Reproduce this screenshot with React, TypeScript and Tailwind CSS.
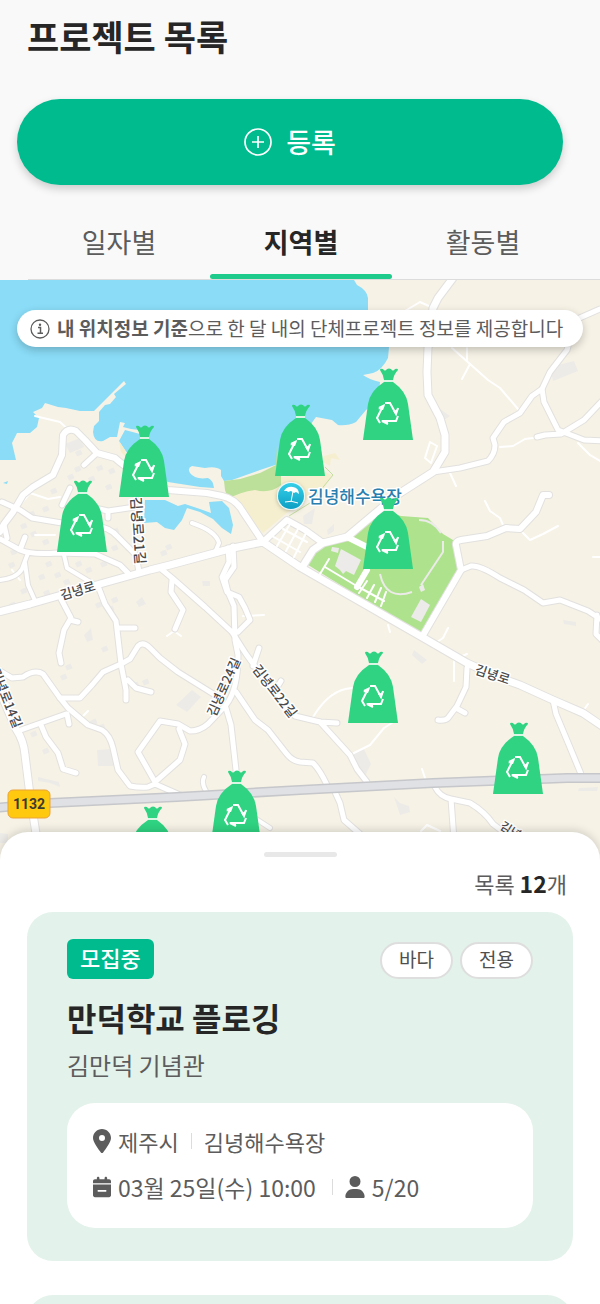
import React, { useState } from 'react';
import { FaCalendarMinus, FaLocationDot, FaUser } from 'react-icons/fa6';

const tabs = ['일자별', '지역별', '활동별'];

const pins = [
  { x: 119, y: 425 },
  { x: 57, y: 480 },
  { x: 275, y: 404 },
  { x: 363, y: 368 },
  { x: 363, y: 497 },
  { x: 348, y: 651 },
  { x: 493, y: 722 },
  { x: 211, y: 770 },
  { x: 127, y: 806 },
];

// Main roads, drawn with a grey casing under the white line
const roads = [
  { w: 7, d: 'M-5 613L30 604L100 584L150 570L170 565L233 548L263 542L300 567L422 637L467 663L500 678L520 685L553 700L583 713L605 728' },
  { w: 7, d: 'M453 278L438 298L433 308L428 348L427 372L428 395L440 418L445 435L445 452L433 472L397 495L347 537L323 543L313 550L303 566' },
  { w: 6, d: 'M263 542L287 520L305 530L323 543' },
  { w: 6, d: 'M263 542L243 512Q236 499 222 496L207 493L168 490Q130 472 115 458L97 453L85 440L76 431Q68 427 63 435L62 455L53 475L33 487L23 495L13 512L4 524L0 532' },
  { w: 6, d: 'M422 637L461 570L456 545Q455 541 461 540L487 536L506 528L520 529L536 512L543 495L549 495' },
  { w: 5, d: 'M461 570L471 566Q480 565 500 578L524 590L543 603L560 600L588 611L605 622M597 615L596 634L604 642' },
  { w: 5, d: 'M433 472L460 468L488 461Q495 454 495 445L493 438L504 422L520 413L532 396L542 389L550 372L567 350L575 320L600 309' },
  { w: 5, d: 'M542 389L544 402L558 430L584 440L605 441M537 437L545 435L561 434L584 420L603 400' },
  { w: 5, d: 'M0 671L12 678L23 677Q35 669 43 674L60 698L68 708L88 725L102 730Q110 735 113 748L118 770L130 786Q140 788 148 787L155 784L180 795' },
  { w: 5, d: 'M60 698L80 698L92 685L103 672L121 664L130 659L138 646Q143 641 150 648L160 658L178 672L215 695' },
  { w: 5, d: 'M98 586L105 604L116 621L121 664L126 690L126 700M118 628L135 628M128 680L136 688L151 692' },
  { w: 5, d: 'M61 599L71 618L64 630L59 653L61 663M70 620L78 622' },
  { w: 5, d: 'M160 568L172 578L205 607L232 632L246 654L265 680L288 709' },
  { w: 5, d: 'M233 546L234 567L225 580L228 592L234 606L235 640L238 655Q238 690 226 705L208 724Q200 731 190 731L178 724L160 721L138 752L155 782L180 760L185 744L179 729' },
  { w: 5, d: 'M228 548L229 562L222 577L227 592L239 597L245 608L250 620L238 632' },
  { w: 5, d: 'M226 708L231 725L236 770L236 790M236 692L255 720L268 730L286 753Q292 761 300 762L313 763Q320 770 327 785' },
  { w: 5, d: 'M172 580L171 592L183 610L175 629M253 666L259 648M276 689L281 681' },
  { w: 5, d: 'M18 731L66 714M41 725L46 737L58 753L63 769L76 773M67 714L69 724' },
  { w: 7, d: 'M0 692L16 729Q24 741 25 755L30 795L37 840' },
  { w: 5, d: 'M295 716L320 722L337 723M320 722L350 755L357 769L367 782' },
  { w: 5, d: 'M467 668L466 687L457 706L448 718Q445 721 438 720M456 708L465 713' },
  { w: 5, d: 'M553 700L556 714L569 745L581 774' },
  { w: 5, d: 'M435 787Q440 797 451 799L470 803Q485 812 493 824L506 834M451 799L454 840M335 792L340 803L344 820L360 834' },
  { w: 5, d: 'M0 539L20 550Q32 555 57 553L95 554L120 565L128 573M2 502L20 510L32 518L62 523M7 538L4 525M20 550L25 537' },
  { w: 5, d: 'M84 465L97 453M95 508L108 511L135 507M108 511L108 518M62 505L70 488M92 525Q110 527 118 537L136 555L139 572' },
  { w: 4, d: 'M28 553L22 569Q17 578 0 580M25 563L28 585L36 603M64 555L67 568L87 580L96 585M204 777Q201 783 206 791' },
  { w: 4, d: 'M192 523Q216 531 219 543L216 550M250 815L270 828' },
];

const lanes = [
  'M35 416L60 422L70 431M20 505L30 493L48 499L60 497M35 535L55 535M12 570L20 580',
  'M400 314L420 302L431 307M452 348L470 364L488 380L500 388L518 409M470 364L462 379M467 348L467 360',
  'M500 447L513 446L525 439L533 438M578 443L590 455L600 461M450 473L456 486',
  'M485 501L490 511L500 518L503 525M521 531L530 540L543 534L558 526M593 557L600 557',
  'M430 442L437 446L431 463L425 458ZM454 655L454 681M460 657L467 654M437 642L443 638L448 628',
  'M313 717Q330 689 352 688M350 755L370 745L384 728L392 723M422 769L425 778M388 625L390 632',
  'M167 636L174 631L181 636M243 616L264 615M82 717L88 711M421 831L427 825L440 831M583 711L588 704',
];

const blocks = [
  'M550 367L574 361L578 371L553 381Z',
  'M440 409L450 416L444 420Z',
  'M176 705L192 690L201 697L187 712Z',
  'M97 750L112 749L114 766L98 766Z',
  'M353 753L364 749L371 764L365 776L356 764Z',
  'M394 797L400 803L409 806L410 812L400 815Z',
  'M414 650L427 660L422 664L412 655Z',
  'M303 516L315 508L312 524L304 524Z',
  'M327 530L334 524L334 531L328 535Z',
  'M563 620L576 622L576 626L564 624Z',
  'M579 788L598 787L597 791L578 791Z',
  'M38 777L59 782L60 787L50 783L38 781Z',
  'M136 602L142 597L146 604L139 607Z',
  'M84 635L91 628L93 640L87 642Z',
  'M202 581L210 581L210 586L203 586Z',
  'M65 444L80 438L84 447L70 453Z',
  'M0 833L8 834L8 843L0 843Z',
];

const houses = [
  [20, 525], [28, 513], [42, 508], [50, 490], [67, 476], [74, 468], [88, 478], [96, 467], [108, 470],
  [105, 486], [75, 452], [30, 533], [42, 541], [10, 551], [8, 564], [45, 563], [54, 574], [38, 576],
  [75, 563], [85, 569], [100, 563], [111, 547], [124, 546], [112, 530], [20, 590], [9, 604], [22, 606],
  [43, 592], [63, 581], [111, 599], [95, 604], [107, 608], [101, 648], [65, 666], [60, 676], [90, 721],
  [30, 733], [42, 750], [98, 726], [132, 684], [142, 681], [165, 546], [160, 552],
];

const TrashBag = () => (
  <g>
    <path
      d="M17 2Q17 0 20 1Q22 4 24 1Q26 0 28 1Q30 4 32 1Q35 0 35 2Q31 6 30 12H21Q20 6 17 2Z"
      fill="#2fd382"
    />
    <path d="M21 14H30Q43 23 45 36L50 72H0L5 36Q7 23 21 14Z" fill="#2fd382" />
    <path d="M21 12H30V14H21Z" fill="#d9f6e4" />
    <g fill="none" stroke="#fff" strokeWidth="2">
      <path d="M22 35H27L33 46L35 40" />
      <path d="M17 55L14 50L20 38L16 40" />
      <path d="M35 48L33 53H19L25 56" />
    </g>
    <path d="M15 41L22 37L20 42ZM30 43L33 47L36 40L33 42ZM18 52L25 52V56Z" fill="#fff" />
  </g>
);

const ProjectMap: React.FC = () => (
  <svg
    className="block h-full w-full"
    viewBox="0 280 600 584"
    preserveAspectRatio="xMidYMin slice"
    fontFamily="'Noto Sans CJK KR', sans-serif"
    role="img"
    aria-label="김녕해수욕장 주변 지도"
  >
    <defs>
      <linearGradient id="beach" x1="0" y1="0" x2="0" y2="1">
        <stop offset="0" stopColor="#35cfe8" />
        <stop offset="1" stopColor="#0e9fc4" />
      </linearGradient>
      <filter id="soft" x="-30%" y="-30%" width="160%" height="160%">
        <feDropShadow dx="0" dy="1" stdDeviation="2" floodOpacity="0.25" />
      </filter>
    </defs>

    <rect y="280" width="600" height="584" fill="#f6f2e6" />

    {/* Sea and harbour */}
    <path
      d="M0 280H354L357 285Q367 290 368 298V312L389 347L388 358Q382 370 373 373L363 375Q370 380 380 382L378 400L366 410L356 422Q348 426 338 425L332 420L316 417L311 424L300 440L283 450L278 464L260 470L232 480L224 481L221 476L221 470Q216 466 205 468L192 466Q187 468 190 473Q195 480 208 478Q213 480 214 488L200 487L168 482L140 470L125 450L119 441L125 430L140 434L140 430L131 429L123 427L125 423L120 422L117 437L110 437L103 441Q94 443 93 432L94 426L99 421L99 412L105 405L110 404L116 397L114 394L126 384L124 381L94 411L80 411L66 408L58 407L45 403L42 408L33 412L39 418L37 427L30 433L17 433L12 443L16 460L0 460Z"
      fill="#8adcf7"
    />
    <path
      d="M145 500L165 500L178 506L185 504L200 509L211 513L209 502L222 501L229 508L233 525L231 534L222 528L213 519L200 512L187 508L182 520L174 530L165 528L157 522L144 523Z"
      fill="#8adcf7"
    />
    <path d="M3 483L8 481L7 484Z" fill="#8adcf7" />
    <path d="M119 441L125 450L127 458L121 452Z" fill="#f5eccb" />

    {/* Beach */}
    <path d="M228 497L245 488L275 478L325 472L332 475L325 487L288 512L263 533L247 515Z" fill="#f6efcf" />
    <path d="M324 456L335 453L340 460L331 458L330 466L323 462Z" fill="#f6efcf" />
    <path d="M224 481L240 479L260 473L276 465L277 445L281 475V485Q270 494 255 490Q240 492 228 499L225 490Z" fill="#bce09a" />
    <path d="M325 467L333 475L310 503L289 516" fill="none" stroke="#c4dda0" />

    {/* Park */}
    <path d="M305 563L320 545L347 537L378 510L401 516L428 518L443 534L458 543L461 565L422 636Z" fill="#aee28d" />
    <g fill="#ecebe9">
      <path d="M341 549L361 560L354 575L346 571L343 574L340 570L335 566Z" />
      <path d="M332 547L339 548L338 553L331 551Z" />
      <path d="M421 599L430 605L421 622L411 617Z" />
      <path d="M419 587L423 584L425 590L421 592Z" />
    </g>
    <g fill="none" stroke="#ecebe9" strokeWidth="2">
      <path d="M419 520Q433 520 441 533" />
      <path d="M443 541V552L421 585" />
      <path d="M380 574Q386 601 412 592" />
    </g>

    <g fill="#edebe8">
      {blocks.map((d) => (
        <path key={d} d={d} />
      ))}
      {houses.map(([x, y]) => (
        <rect key={`${x}-${y}`} x={x} y={y} width="6" height="5" transform={`rotate(-24 ${x} ${y})`} />
      ))}
    </g>

    <g fill="none" strokeLinecap="round" strokeLinejoin="round">
      <g stroke="#fff" strokeWidth="2">
        {lanes.map((d) => (
          <path key={d} d={d} />
        ))}
      </g>
      <g stroke="#e2e1df">
        {roads.map((road) => (
          <path key={road.d} d={road.d} strokeWidth={road.w + 2} />
        ))}
      </g>
      <g stroke="#fff">
        {roads.map((road) => (
          <path key={road.d} d={road.d} strokeWidth={road.w} />
        ))}
      </g>
      <path d="M347 537L367 547M367 570L357 587" stroke="#fff" strokeWidth="6" />
      <path
        d="M320 574L329 559M325 567L355 585L384 601M359 593L367 581M367 598L374 585M375 602L381 588M381 606L386 592M272 536L300 552M283 529L307 542M290 524L277 546M298 529L286 551M306 533L294 557"
        stroke="#fff"
        strokeWidth="2"
      />
      <path d="M-5 808L50 803L177 797L300 790L433 783L567 778L605 778" stroke="#c6c7ca" strokeWidth="10" />
      <path d="M-5 808L50 803L177 797L300 790L433 783L567 778L605 778" stroke="#e0e1e5" strokeWidth="7" />
    </g>

    {/* Road names */}
    <g
      fill="#4a4a4a"
      stroke="#fff"
      strokeWidth="3"
      strokeLinejoin="round"
      paintOrder="stroke"
      fontSize="13"
      fontWeight="500"
      textAnchor="middle"
    >
      <text transform="translate(79 595) rotate(-16)">김녕로</text>
      <text transform="translate(491 679) rotate(18)">김녕로</text>
      <text transform="translate(133 531) rotate(86)" fontSize="14">김녕로21길</text>
      <text transform="translate(228 689) rotate(-66)">김녕로24길</text>
      <text transform="translate(271 694) rotate(52)">김녕로22길</text>
      <text transform="translate(2 700) rotate(68)">김녕로14길</text>
      <text transform="translate(513 837) rotate(32)" fontSize="12">김녕로</text>
    </g>

    {/* Route shield */}
    <rect x="8" y="790" width="42" height="28" rx="5" fill="#ffc90f" stroke="#eba33b" strokeWidth="1" />
    <text x="29" y="809" fontSize="14" fontWeight="700" textAnchor="middle" fill="#3c3a30" fontFamily="Roboto, sans-serif">
      1132
    </text>

    {/* Beach marker */}
    <g filter="url(#soft)">
      <circle cx="291" cy="496" r="14" fill="#eefafc" />
    </g>
    <circle cx="291" cy="496" r="13" fill="url(#beach)" />
    <path d="M284 491Q287 486 293 487Q299 488 299 494L296 492L294 493L291 491L288 492L287 491Z" fill="#fff" />
    <path d="M293 491L291 502M285 502Q291 500 298 503" fill="none" stroke="#fff" />
    <text
      x="308"
      y="503"
      fontSize="17"
      fontWeight="500"
      fill="#2a7fae"
      stroke="#fff"
      strokeWidth="3"
      strokeLinejoin="round"
      paintOrder="stroke"
    >
      김녕해수욕장
    </text>

    {pins.map((pin) => (
      <g key={`${pin.x}-${pin.y}`} transform={`translate(${pin.x} ${pin.y})`}>
        <TrashBag />
      </g>
    ))}
  </svg>
);

const PlusCircleIcon = () => (
  <svg className="h-7 w-7" viewBox="0 0 28 28" fill="none" stroke="currentColor" strokeWidth="1.7" aria-hidden="true">
    <circle cx="14" cy="14" r="13" />
    <path d="M14 8V20M8 14H20" />
  </svg>
);

const InfoIcon = () => (
  <svg className="h-5 w-5 shrink-0" viewBox="0 0 20 20" fill="none" stroke="currentColor" aria-hidden="true">
    <circle cx="10" cy="10" r="9" strokeWidth="1.3" />
    <path d="M8 8.5H10.5V14M7.5 14.2H13" strokeWidth="1.5" />
    <circle cx="10" cy="5.7" r="1.2" fill="currentColor" stroke="none" />
  </svg>
);

const Divider = () => <span className="h-4 w-px bg-[#dcdcdc]" />;

const ProjectCard: React.FC = () => (
  <article className="rounded-[26px] bg-[#e3f2ea] px-10 pt-[26px] pb-[33px]">
    <div className="flex items-center justify-between">
      <span className="flex h-10 items-center rounded-md bg-[#00bb8e] px-[13px] pb-[2px] text-[22px] font-medium text-white">
        모집중
      </span>
      <div className="flex gap-[7px] pt-1 text-[19px] text-[#4f4f4f]">
        {['바다', '전용'].map((label) => (
          <span
            key={label}
            className="flex h-[37px] w-[73px] items-center justify-center rounded-full border-2 border-[#dedede] bg-white pb-[2px]"
          >
            {label}
          </span>
        ))}
      </div>
    </div>
    <h2 className="mt-4 text-[32px] leading-[44px] font-bold text-[#262626]">만덕학교 플로깅</h2>
    <p className="mt-[10px] text-2xl leading-8 text-[#5c5c5c]">김만덕 기념관</p>
    <div className="mt-[22px] flex flex-col gap-[14px] rounded-[28px] bg-white px-[26px] pt-[22px] pb-[25px] text-[#5c5c5c]">
      <div className="flex h-8 items-center text-[22px]">
        <FaLocationDot className="mr-[7px] h-6 w-[18px]" />
        <span className="mr-3">제주시</span>
        <Divider />
        <span className="ml-3">김녕해수욕장</span>
      </div>
      <div className="flex h-8 items-center text-[23px]">
        <FaCalendarMinus className="mr-[7px] h-[22px] w-[18px]" />
        <span className="mr-4">03월 25일(수) 10:00</span>
        <Divider />
        <FaUser className="mr-[7px] ml-3 h-[22px] w-5" />
        <span>5/20</span>
      </div>
    </div>
  </article>
);

export default function App() {
  const [activeTab, setActiveTab] = useState('지역별');

  return (
    <main className="flex h-screen flex-col overflow-hidden bg-[#f9f9f9] font-['Noto_Sans_CJK_KR',sans-serif]">
      <header className="flex flex-col">
        <h1 className="mt-3 px-[27px] text-[35px] leading-[48px] font-bold text-[#262626]">프로젝트 목록</h1>
        <button
          type="button"
          className="mt-[39px] mr-[37px] ml-[17px] flex h-[86px] items-center justify-center gap-[14px] rounded-full bg-[#00bb8e] text-[27px] font-medium text-white shadow-[0_4px_8px_rgba(0,0,0,0.18)]"
        >
          <PlusCircleIcon />
          등록
        </button>
        <div role="tablist" className="mt-5 ml-7 flex border-b border-[#dcdcdc] pr-[26px]">
          {tabs.map((tab) => (
            <button
              key={tab}
              type="button"
              role="tab"
              aria-selected={activeTab === tab}
              onClick={() => setActiveTab(tab)}
              className={`relative h-[74px] flex-1 text-[27px] ${
                activeTab === tab ? 'font-bold text-[#262626]' : 'text-[#5c5c5c]'
              }`}
            >
              {tab}
              {activeTab === tab && <span className="absolute inset-x-0 bottom-0 h-[5px] rounded-sm bg-[#1fcb8c]" />}
            </button>
          ))}
        </div>
      </header>

      <section className="relative h-[584px] shrink-0 overflow-hidden">
        <ProjectMap />
        <p className="absolute inset-x-[17px] top-[30px] flex h-[37px] items-center gap-[7px] rounded-full bg-white pl-[13px] text-[19px] whitespace-nowrap text-[#5c5c5c] shadow-[0_3px_8px_rgba(0,0,0,0.22)]">
          <InfoIcon />
          <span>
            <strong className="font-bold">내 위치정보 기준</strong>으로 한 달 내의 단체프로젝트 정보를 제공합니다
          </span>
        </p>
      </section>

      <section className="relative -mt-8 flex-1 overflow-hidden rounded-t-[28px] bg-white px-[27px] pt-5 shadow-[0_-2px_8px_rgba(0,0,0,0.15)]">
        <div className="mx-auto h-[5px] w-[73px] rounded-full bg-[#e8e8e8]" />
        <p className="mt-[10px] pr-[6px] text-right text-[22px] leading-8 text-[#5c5c5c]">
          목록 <strong className="text-[23px] font-bold text-[#262626]">12</strong>개
        </p>
        <div className="mt-[13px] flex flex-col gap-[34px]">
          <ProjectCard />
          {/* next card, still loading */}
          <div className="h-[348px] rounded-[26px] bg-[#e3f2ea]" />
        </div>
      </section>
    </main>
  );
}
